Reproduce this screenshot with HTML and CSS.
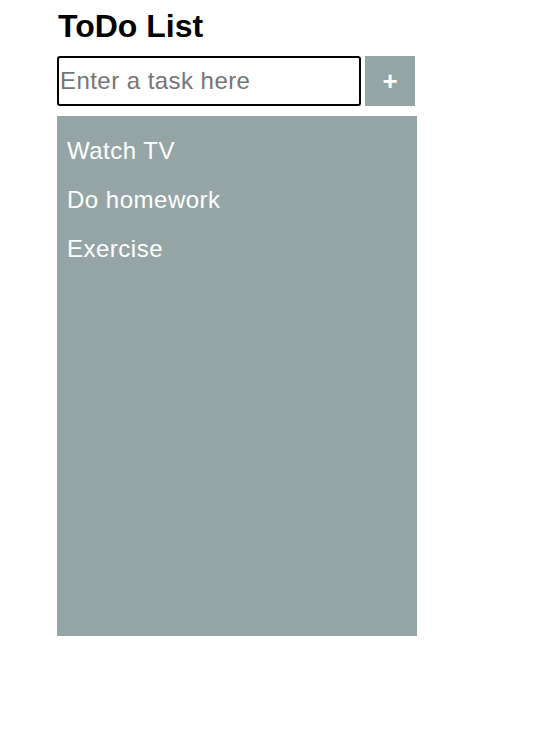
FILE: index.html
```html
<!DOCTYPE html>
<html>
<head>
<meta charset="utf-8">
<link rel="stylesheet" href="styles.css">
</head>
<body>
<div class="app">
  <h1 class="title">ToDo List</h1>
  <div class="entry">
    <input class="task-input" type="text" placeholder="Enter a task here">
    <button class="add-btn">+</button>
  </div>
  <ul class="tasks">
    <li class="task">Watch TV</li>
    <li class="task">Do homework</li>
    <li class="task">Exercise</li>
  </ul>
</div>
</body>
</html>
```
FILE: styles.css
```css
html, body {
  margin: 0;
  padding: 0;
  background: #fff;
}
body {
  font-family: "Liberation Sans", Arial, sans-serif;
}
.app {
  width: 360px;
  padding: 8px 0 0 57px;
}
.title {
  margin: 0 0 11px 1px;
  font-size: 32px;
  line-height: 37px;
  font-weight: bold;
  color: #000;
}
.entry {
  display: flex;
  gap: 4px;
  height: 50px;
}
.task-input {
  box-sizing: border-box;
  width: 304px;
  height: 50px;
  border: 2px solid #000;
  border-radius: 3px;
  padding: 0 1px;
  font-family: "Liberation Sans", Arial, sans-serif;
  font-size: 24px;
  letter-spacing: 0.45px;
  color: #000;
  outline: none;
}
.task-input::placeholder {
  color: #757575;
}
.add-btn {
  width: 50px;
  height: 50px;
  border: none;
  background: #95a5a6;
  color: #fff;
  font-family: "Liberation Sans", Arial, sans-serif;
  font-size: 26px;
  font-weight: bold;
  padding: 0;
}
.tasks {
  list-style: none;
  margin: 10px 0 0 0;
  padding: 10px 0;
  box-sizing: border-box;
  width: 360px;
  height: 520px;
  background: #95a5a6;
}
.task {
  padding: 10px;
  font-size: 24px;
  line-height: 29px;
  letter-spacing: 0.5px;
  color: #fff;
}
```
